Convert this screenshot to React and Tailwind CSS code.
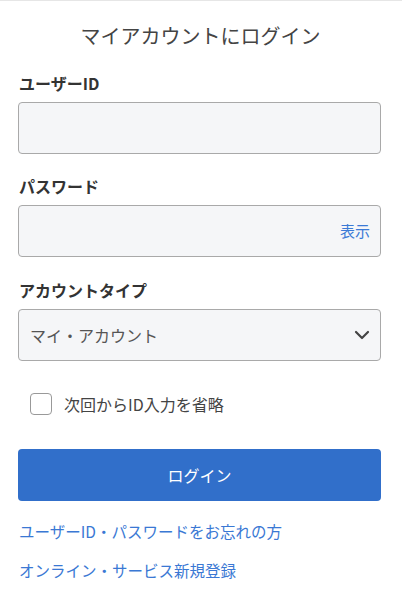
import React from "react";

export default function App() {
  const font = { fontFamily: '"Noto Sans CJK JP", "Noto Sans", sans-serif' };
  return (
    <div className="w-[402px] min-h-[600px] bg-white border-t border-[#e6e6e6]" style={font}>
      <div className="pl-[18px] pr-[21px]">
        <h1 className="pt-[21px] text-center text-[20px] leading-[28px] font-normal text-[#444] pl-[2px]">
          マイアカウントにログイン
        </h1>

        <div className="mt-[21px] text-[16px] leading-[24px] font-bold text-[#333] pl-px">ユーザーID</div>
        <div className="mt-[7px] h-[52px] rounded-[4px] border border-[#a9a9a9] bg-[#f5f6f8]"></div>

        <div className="mt-[20px] text-[16px] leading-[24px] font-bold text-[#333] pl-px">パスワード</div>
        <div className="mt-[7px] h-[52px] rounded-[4px] border border-[#a9a9a9] bg-[#f5f6f8] flex items-center justify-end pr-[10px]">
          <span className="text-[15px] text-[#3b7ad6]">表示</span>
        </div>

        <div className="mt-[21px] text-[16px] leading-[24px] font-bold text-[#333] pl-px">アカウントタイプ</div>
        <div className="mt-[7px] h-[52px] rounded-[4px] border border-[#a9a9a9] bg-[#f5f6f8] flex items-center justify-between pl-[11px] pr-[10px]">
          <span className="text-[16px] text-[#555]">マイ・アカウント</span>
          <svg width="16" height="10" viewBox="0 0 16 10" fill="none">
            <path d="M2 2 L8 8 L14 2" stroke="#444" strokeWidth="2.2" strokeLinecap="round" strokeLinejoin="round" />
          </svg>
        </div>

        <div className="mt-[31px] flex items-center pl-[12px] gap-[12px]">
          <div className="w-[22px] h-[22px] rounded-[4px] border border-[#999] bg-white"></div>
          <span className="text-[16px] leading-[24px] text-[#444]">次回からID入力を省略</span>
        </div>

        <button className="mt-[33px] w-full h-[52px] rounded-[4px] bg-[#316fca] text-white text-[16px] flex items-center justify-center">
          ログイン
        </button>

        <div className="mt-[18px] text-[15.5px] leading-[24px] text-[#3a78d4] pl-px">ユーザーID・パスワードをお忘れの方</div>
        <div className="mt-[15px] text-[15.5px] leading-[24px] text-[#3a78d4] pl-px">オンライン・サービス新規登録</div>
      </div>
    </div>
  );
}
